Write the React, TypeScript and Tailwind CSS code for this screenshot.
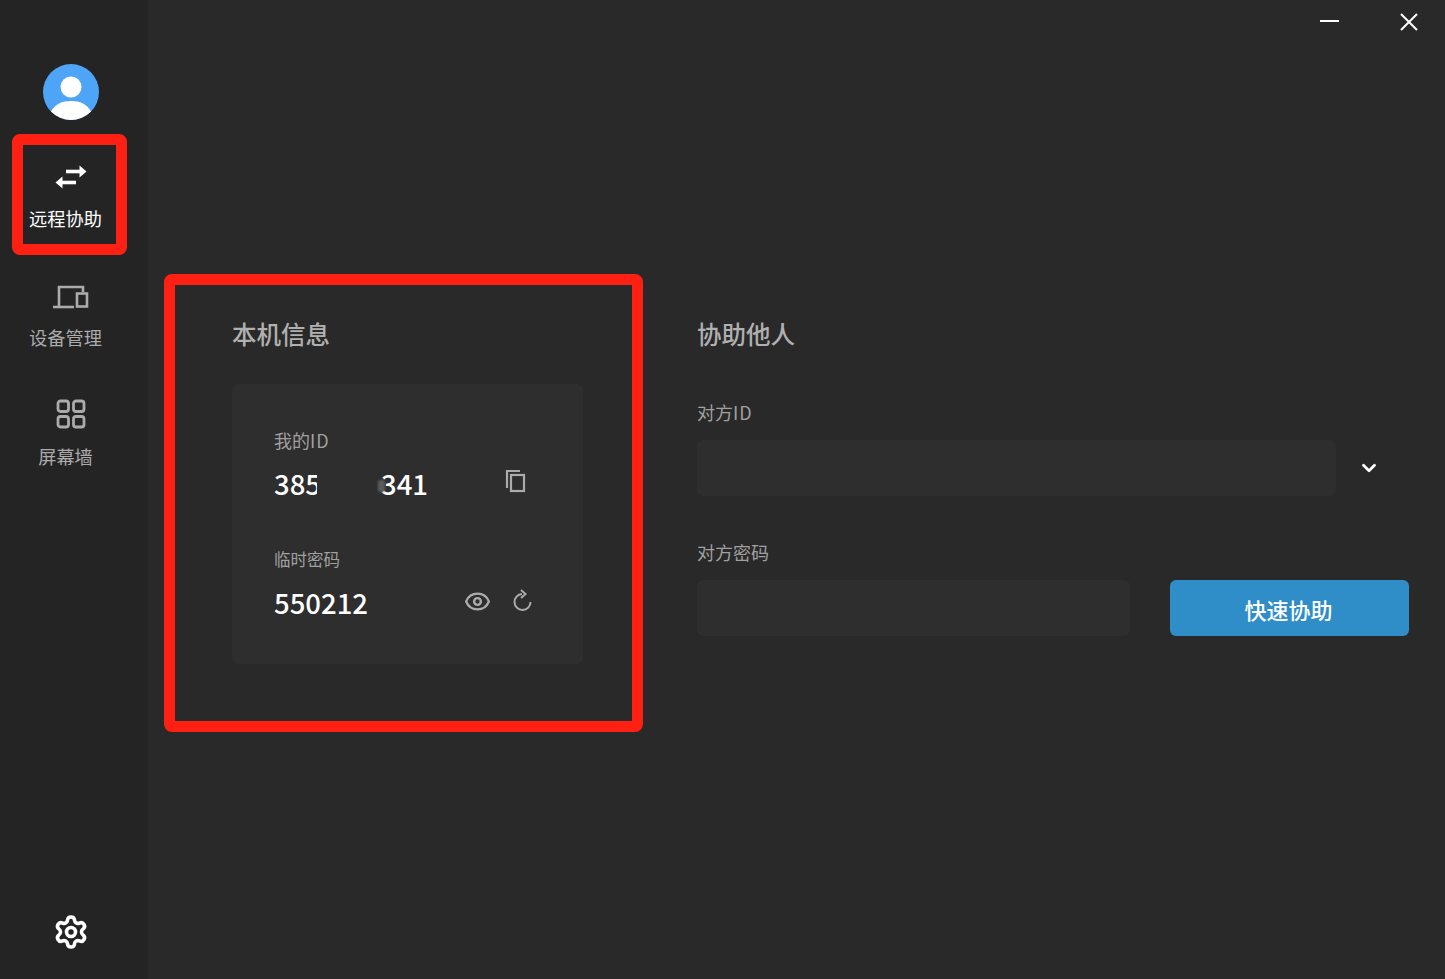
import { Settings, Eye, ChevronDown } from "lucide-react";

const font = { fontFamily: '"Noto Sans CJK SC", "Noto Sans", sans-serif' };

function NavLabel({ text, active }: { text: string; active?: boolean }) {
  return (
    <span className={`pr-[11px] text-[18.2px] leading-[24px] whitespace-nowrap ${active ? "text-white" : "text-[#ababab]"}`}>
      {text}
    </span>
  );
}

function Sidebar() {
  return (
    <aside className="relative flex h-full w-[148px] shrink-0 flex-col items-center bg-[#242424] pt-[64px] pr-[6px] pb-[29px]">
      <svg width="56" height="56" viewBox="0 0 56 56" className="shrink-0">
        <circle cx="28" cy="28" r="28" fill="#4ea5f8" />
        <circle cx="28" cy="23" r="10.5" fill="#fff" />
        <path d="M8 47.5C12 40 19 37 28 37s16 3 20 10.5A28 28 0 0 1 8 47.5z" fill="#fff" />
      </svg>

      <div className="mt-[43px] flex flex-col items-center gap-[15px]">
        <svg width="32" height="28" viewBox="0 0 32 28" fill="none" className="shrink-0">
          <path d="M11 8.5h15" stroke="#fff" strokeWidth="3.6" />
          <path d="M24.5 2.5l7 6-7 6z" fill="#fff" />
          <path d="M21 19.5H7" stroke="#fff" strokeWidth="3.6" />
          <path d="M7.5 13.5L0.5 19.5l7 6z" fill="#fff" />
        </svg>
        <NavLabel text="远程协助" active />
      </div>

      <div className="mt-[54px] flex flex-col items-center gap-[15px]">
        <svg width="36" height="26" viewBox="0 0 36 26" fill="none" stroke="#ababab" strokeWidth="2.6" className="shrink-0">
          <path d="M6 22V3h24v5" />
          <path d="M0 23h21" />
          <rect x="24" y="9.5" width="10" height="13" />
        </svg>
        <NavLabel text="设备管理" />
      </div>

      <div className="mt-[50px] flex flex-col items-center gap-[15px]">
        <svg width="30" height="30" viewBox="0 0 30 30" fill="none" stroke="#ababab" strokeWidth="2.8" className="shrink-0">
          <rect x="2" y="2" width="10.5" height="10.5" rx="2.5" />
          <rect x="17.5" y="2" width="10.5" height="10.5" rx="2.5" />
          <rect x="2" y="17.5" width="10.5" height="10.5" rx="2.5" />
          <rect x="17.5" y="17.5" width="10.5" height="10.5" rx="2.5" />
        </svg>
        <NavLabel text="屏幕墙" />
      </div>

      <Settings size={36} strokeWidth={2.4} className="mt-auto text-white" />

      <div className="absolute top-[134px] left-[12px] h-[121px] w-[115px] rounded-[8px] border-[11px] border-[#ff2014]" />
    </aside>
  );
}

function LocalInfo() {
  return (
    <section className="relative w-[351px] shrink-0">
      <h2 className="text-[24.5px] leading-[32px] font-medium text-[#b0b0b0]">本机信息</h2>
      <div className="mt-[34px] flex h-[280px] flex-col rounded-[6px] bg-[#2e2e2e] pt-[44px] pr-[50px] pl-[42px]">
        <span className="text-[18px] leading-[24px] text-[#a0a0a0]">
          我的<span className="tracking-[1px]">ID</span>
        </span>
        <div className="mt-[13px] flex h-[36px] items-center justify-between">
          <div className="relative flex items-center text-[27.5px] leading-[36px] font-medium text-white">
            <span className="w-[43px] overflow-hidden">385</span>
            <span className="ml-[64px]">341</span>
            <span className="absolute top-[15px] left-[104px] h-[12px] w-[7px] rounded-[2px] bg-[#5c5c5c] blur-[1px]" />
          </div>
          <svg width="22" height="24" viewBox="0 0 22 24" fill="none" stroke="#ababab" strokeWidth="2.2" className="mr-[6px] mb-[4px]">
            <path d="M2 19V2h13" />
            <rect x="6" y="6" width="13" height="16" />
          </svg>
        </div>

        <span className="mt-[46px] text-[16.5px] leading-[24px] text-[#a0a0a0]">临时密码</span>
        <div className="mt-[13px] flex h-[36px] items-center justify-between">
          <span className="text-[27.5px] leading-[36px] font-medium text-white">550212</span>
          <div className="mb-[2px] flex items-center gap-[22px]">
            <Eye size={27} strokeWidth={2.2} className="text-[#ababab]" />
            <svg width="20" height="24" viewBox="0 0 20 24" fill="none" stroke="#ababab" strokeWidth="2" className="shrink-0">
              <path d="M17.5 13a8 8 0 1 1-8.5-8" />
              <path d="M8 1l4.5 4L8 9" />
            </svg>
          </div>
        </div>
      </div>
      <div className="absolute top-[-44px] left-[-68px] h-[458px] w-[479px] rounded-[8px] border-[11px] border-[#ff2014]" />
    </section>
  );
}

function HelpOthers() {
  return (
    <section className="w-[712px] shrink-0">
      <h2 className="text-[24.5px] leading-[32px] font-medium text-[#b0b0b0]">协助他人</h2>
      <label className="mt-[50px] block text-[18px] leading-[24px] text-[#a0a0a0]">
        对方<span className="tracking-[1px]">ID</span>
      </label>
      <div className="mt-[16px] flex items-center">
        <div className="h-[56px] w-[639px] rounded-[6px] bg-[#2e2e2e]" />
        <ChevronDown size={22} strokeWidth={3} className="ml-[22px] text-white" />
      </div>
      <label className="mt-[44px] block text-[18px] leading-[24px] text-[#a0a0a0]">对方密码</label>
      <div className="mt-[16px] flex items-center justify-between">
        <div className="h-[56px] w-[433px] rounded-[6px] bg-[#2e2e2e]" />
        <button className="h-[56px] w-[239px] rounded-[6px] bg-[#2f8dc8] pt-[2px] pr-[2px] text-[22px] font-medium text-white">快速协助</button>
      </div>
    </section>
  );
}

export default function App() {
  return (
    <div className="flex h-[979px] w-[1445px] overflow-hidden bg-[#292929]" style={font}>
      <Sidebar />
      <main className="flex flex-1 flex-col">
        <div className="flex h-[44px] items-start justify-end gap-[60px] pt-[12px] pr-[26px]">
          <span className="mt-[8px] h-[2px] w-[19px] bg-white" />
          <svg width="20" height="20" viewBox="0 0 20 20" stroke="#fff" strokeWidth="2" className="shrink-0">
            <path d="M2 2l16 16M18 2L2 18" />
          </svg>
        </div>
        <div className="mt-[274px] flex gap-[113px] pl-[84px]">
          <LocalInfo />
          <div className="pl-[1px]">
            <HelpOthers />
          </div>
        </div>
      </main>
    </div>
  );
}
